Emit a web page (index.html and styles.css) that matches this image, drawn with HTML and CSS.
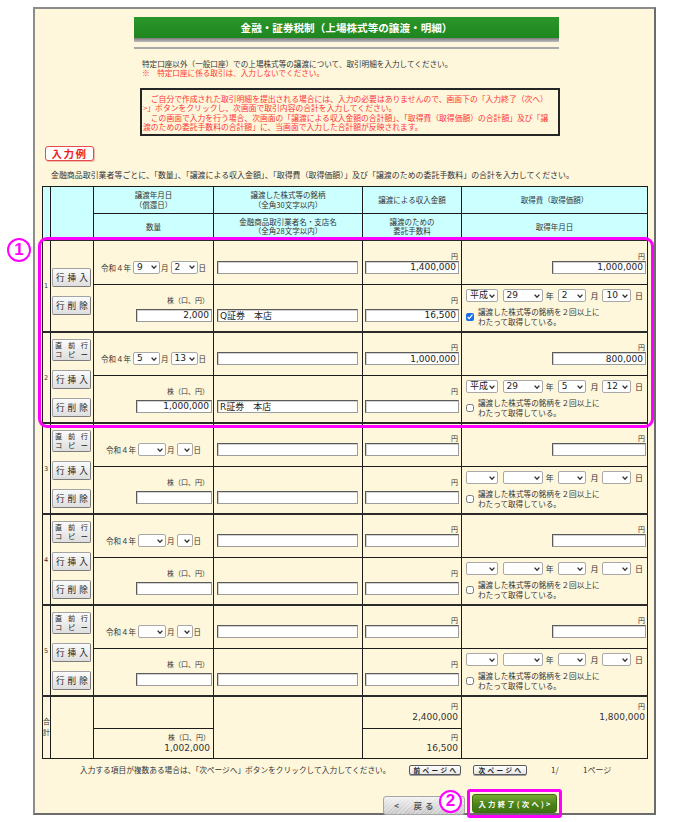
FILE: index.html
```html
<!DOCTYPE html>
<html lang="ja">
<head>
<meta charset="utf-8">
<title>金融・証券税制（上場株式等の譲渡・明細）</title>
<link rel="stylesheet" href="styles.css">
</head>
<body>
<div class="page">
  <div class="panel">
    <div class="title-wrap">
      <div class="title-bar">金融・証券税制（上場株式等の譲渡・明細）</div>
      <div class="title-shadow"></div>
      <div class="title-line"></div>
    </div>
    <p class="intro">特定口座以外（一般口座）での上場株式等の譲渡について、取引明細を入力してください。<br><span class="warn">※　特定口座に係る取引は、入力しないでください。</span></p>
    <div class="notice">　ご自分で作成された取引明細を提出される場合には、入力の必要はありませんので、画面下の「入力終了（次へ）<br>&gt;」ボタンをクリックし、次画面で取引内容の合計を入力してください。<br>　この画面で入力を行う場合、次画面の「譲渡による収入金額の合計額」、「取得費（取得価額）の合計額」及び「譲<br>渡のための委託手数料の合計額」に、当画面で入力した合計額が反映されます。</div>
    <div class="badge">入力例</div>
    <p class="lead">金融商品取引業者等ごとに、「数量」、「譲渡による収入金額」、「取得費（取得価額）」及び「譲渡のための委託手数料」の合計を入力してください。</p>

    <table class="detail">
      <colgroup>
        <col class="c-a"><col class="c-b"><col class="c-c"><col class="c-d"><col class="c-e"><col class="c-f">
      </colgroup>
      <thead>
        <tr class="h1">
          <th rowspan="2"></th>
          <th rowspan="2"></th>
          <th>譲渡年月日<br>（償還日）</th>
          <th>譲渡した株式等の銘柄<br>（全角30文字以内）</th>
          <th>譲渡による収入金額</th>
          <th>取得費（取得価額）</th>
        </tr>
        <tr class="h2">
          <th>数量</th>
          <th>金融商品取引業者名・支店名<br>（全角28文字以内）</th>
          <th>譲渡のための<br>委託手数料</th>
          <th>取得年月日</th>
        </tr>
      </thead>
      <tbody>
        <!-- record 1 -->
        <tr class="r1 first">
          <td class="num" rowspan="2">1</td>
          <td class="ops" rowspan="2">
            <div class="ops-in pad-first">
              <button class="btn act">行挿入</button>
              <button class="btn act">行削除</button>
            </div>
          </td>
          <td class="date">
            <div class="unit"></div>
            <div class="ctl">令和４年<span class="sel w27">9<svg viewBox="0 0 6 4"><path d="M0.6 0.6 L3 3.2 L5.4 0.6"/></svg></span>月<span class="sel w27">2<svg viewBox="0 0 6 4"><path d="M0.6 0.6 L3 3.2 L5.4 0.6"/></svg></span>日</div>
          </td>
          <td class="name"><div class="unit"></div><input class="txt w141" type="text" value=""></td>
          <td class="amt"><div class="unit">円</div><input class="txt num-in w94" type="text" value="1,400,000"></td>
          <td class="amt f"><div class="unit">円</div><input class="txt num-in w94" type="text" value="1,000,000"></td>
        </tr>
        <tr class="r2">
          <td class="qty"><div class="unit">株（口、円）</div><input class="txt num-in w76" type="text" value="2,000"></td>
          <td class="name"><div class="unit"></div><input class="txt w141" type="text" value="Q証券　本店"></td>
          <td class="amt"><div class="unit">円</div><input class="txt num-in w94" type="text" value="16,500"></td>
          <td class="acq">
            <div class="acq-sel"><span class="sel w32">平成<svg viewBox="0 0 6 4"><path d="M0.6 0.6 L3 3.2 L5.4 0.6"/></svg></span><span class="sel w41">29<svg viewBox="0 0 6 4"><path d="M0.6 0.6 L3 3.2 L5.4 0.6"/></svg></span><span class="u">年</span><span class="sel w29">2<svg viewBox="0 0 6 4"><path d="M0.6 0.6 L3 3.2 L5.4 0.6"/></svg></span><span class="u">月</span><span class="sel w29">10<svg viewBox="0 0 6 4"><path d="M0.6 0.6 L3 3.2 L5.4 0.6"/></svg></span><span class="u">日</span></div>
            <label class="chk"><input type="checkbox" checked><span>譲渡した株式等の銘柄を２回以上に<br>わたって取得している。</span></label>
          </td>
        </tr>

        <!-- record 2 -->
        <tr class="r1">
          <td class="num" rowspan="2">2</td>
          <td class="ops" rowspan="2">
            <div class="ops-in">
              <button class="btn copy"><span class="ln"><span>直</span><span>前</span><span>行</span></span><span class="ln"><span>コ</span><span>ピ</span><span>ー</span></span></button>
              <button class="btn act">行挿入</button>
              <button class="btn act">行削除</button>
            </div>
          </td>
          <td class="date">
            <div class="unit"></div>
            <div class="ctl">令和４年<span class="sel w27">5<svg viewBox="0 0 6 4"><path d="M0.6 0.6 L3 3.2 L5.4 0.6"/></svg></span>月<span class="sel w27">13<svg viewBox="0 0 6 4"><path d="M0.6 0.6 L3 3.2 L5.4 0.6"/></svg></span>日</div>
          </td>
          <td class="name"><div class="unit"></div><input class="txt w141" type="text" value=""></td>
          <td class="amt"><div class="unit">円</div><input class="txt num-in w94" type="text" value="1,000,000"></td>
          <td class="amt f"><div class="unit">円</div><input class="txt num-in w94" type="text" value="800,000"></td>
        </tr>
        <tr class="r2">
          <td class="qty"><div class="unit">株（口、円）</div><input class="txt num-in w76" type="text" value="1,000,000"></td>
          <td class="name"><div class="unit"></div><input class="txt w141" type="text" value="R証券　本店"></td>
          <td class="amt"><div class="unit">円</div><input class="txt num-in w94" type="text" value=""></td>
          <td class="acq">
            <div class="acq-sel"><span class="sel w32">平成<svg viewBox="0 0 6 4"><path d="M0.6 0.6 L3 3.2 L5.4 0.6"/></svg></span><span class="sel w41">29<svg viewBox="0 0 6 4"><path d="M0.6 0.6 L3 3.2 L5.4 0.6"/></svg></span><span class="u">年</span><span class="sel w29">5<svg viewBox="0 0 6 4"><path d="M0.6 0.6 L3 3.2 L5.4 0.6"/></svg></span><span class="u">月</span><span class="sel w29">12<svg viewBox="0 0 6 4"><path d="M0.6 0.6 L3 3.2 L5.4 0.6"/></svg></span><span class="u">日</span></div>
            <label class="chk"><input type="checkbox"><span>譲渡した株式等の銘柄を２回以上に<br>わたって取得している。</span></label>
          </td>
        </tr>

        <!-- record 3 -->
        <tr class="r1">
          <td class="num" rowspan="2">3</td>
          <td class="ops" rowspan="2">
            <div class="ops-in">
              <button class="btn copy"><span class="ln"><span>直</span><span>前</span><span>行</span></span><span class="ln"><span>コ</span><span>ピ</span><span>ー</span></span></button>
              <button class="btn act">行挿入</button>
              <button class="btn act">行削除</button>
            </div>
          </td>
          <td class="date">
            <div class="unit"></div>
            <div class="ctl">令和４年<span class="sel w28 empty"><svg viewBox="0 0 6 4"><path d="M0.6 0.6 L3 3.2 L5.4 0.6"/></svg></span>月<span class="sel w16 empty"><svg viewBox="0 0 6 4"><path d="M0.6 0.6 L3 3.2 L5.4 0.6"/></svg></span>日</div>
          </td>
          <td class="name"><div class="unit"></div><input class="txt w141" type="text" value=""></td>
          <td class="amt"><div class="unit">円</div><input class="txt num-in w94" type="text" value=""></td>
          <td class="amt f"><div class="unit">円</div><input class="txt num-in w94" type="text" value=""></td>
        </tr>
        <tr class="r2">
          <td class="qty"><div class="unit">株（口、円）</div><input class="txt num-in w76" type="text" value=""></td>
          <td class="name"><div class="unit"></div><input class="txt w141" type="text" value=""></td>
          <td class="amt"><div class="unit">円</div><input class="txt num-in w94" type="text" value=""></td>
          <td class="acq">
            <div class="acq-sel"><span class="sel w32 empty"><svg viewBox="0 0 6 4"><path d="M0.6 0.6 L3 3.2 L5.4 0.6"/></svg></span><span class="sel w41 empty"><svg viewBox="0 0 6 4"><path d="M0.6 0.6 L3 3.2 L5.4 0.6"/></svg></span><span class="u">年</span><span class="sel w29 empty"><svg viewBox="0 0 6 4"><path d="M0.6 0.6 L3 3.2 L5.4 0.6"/></svg></span><span class="u">月</span><span class="sel w29 empty"><svg viewBox="0 0 6 4"><path d="M0.6 0.6 L3 3.2 L5.4 0.6"/></svg></span><span class="u">日</span></div>
            <label class="chk"><input type="checkbox"><span>譲渡した株式等の銘柄を２回以上に<br>わたって取得している。</span></label>
          </td>
        </tr>

        <!-- record 4 -->
        <tr class="r1">
          <td class="num" rowspan="2">4</td>
          <td class="ops" rowspan="2">
            <div class="ops-in">
              <button class="btn copy"><span class="ln"><span>直</span><span>前</span><span>行</span></span><span class="ln"><span>コ</span><span>ピ</span><span>ー</span></span></button>
              <button class="btn act">行挿入</button>
              <button class="btn act">行削除</button>
            </div>
          </td>
          <td class="date">
            <div class="unit"></div>
            <div class="ctl">令和４年<span class="sel w28 empty"><svg viewBox="0 0 6 4"><path d="M0.6 0.6 L3 3.2 L5.4 0.6"/></svg></span>月<span class="sel w16 empty"><svg viewBox="0 0 6 4"><path d="M0.6 0.6 L3 3.2 L5.4 0.6"/></svg></span>日</div>
          </td>
          <td class="name"><div class="unit"></div><input class="txt w141" type="text" value=""></td>
          <td class="amt"><div class="unit">円</div><input class="txt num-in w94" type="text" value=""></td>
          <td class="amt f"><div class="unit">円</div><input class="txt num-in w94" type="text" value=""></td>
        </tr>
        <tr class="r2">
          <td class="qty"><div class="unit">株（口、円）</div><input class="txt num-in w76" type="text" value=""></td>
          <td class="name"><div class="unit"></div><input class="txt w141" type="text" value=""></td>
          <td class="amt"><div class="unit">円</div><input class="txt num-in w94" type="text" value=""></td>
          <td class="acq">
            <div class="acq-sel"><span class="sel w32 empty"><svg viewBox="0 0 6 4"><path d="M0.6 0.6 L3 3.2 L5.4 0.6"/></svg></span><span class="sel w41 empty"><svg viewBox="0 0 6 4"><path d="M0.6 0.6 L3 3.2 L5.4 0.6"/></svg></span><span class="u">年</span><span class="sel w29 empty"><svg viewBox="0 0 6 4"><path d="M0.6 0.6 L3 3.2 L5.4 0.6"/></svg></span><span class="u">月</span><span class="sel w29 empty"><svg viewBox="0 0 6 4"><path d="M0.6 0.6 L3 3.2 L5.4 0.6"/></svg></span><span class="u">日</span></div>
            <label class="chk"><input type="checkbox"><span>譲渡した株式等の銘柄を２回以上に<br>わたって取得している。</span></label>
          </td>
        </tr>

        <!-- record 5 -->
        <tr class="r1">
          <td class="num" rowspan="2">5</td>
          <td class="ops" rowspan="2">
            <div class="ops-in">
              <button class="btn copy"><span class="ln"><span>直</span><span>前</span><span>行</span></span><span class="ln"><span>コ</span><span>ピ</span><span>ー</span></span></button>
              <button class="btn act">行挿入</button>
              <button class="btn act">行削除</button>
            </div>
          </td>
          <td class="date">
            <div class="unit"></div>
            <div class="ctl">令和４年<span class="sel w28 empty"><svg viewBox="0 0 6 4"><path d="M0.6 0.6 L3 3.2 L5.4 0.6"/></svg></span>月<span class="sel w16 empty"><svg viewBox="0 0 6 4"><path d="M0.6 0.6 L3 3.2 L5.4 0.6"/></svg></span>日</div>
          </td>
          <td class="name"><div class="unit"></div><input class="txt w141" type="text" value=""></td>
          <td class="amt"><div class="unit">円</div><input class="txt num-in w94" type="text" value=""></td>
          <td class="amt f"><div class="unit">円</div><input class="txt num-in w94" type="text" value=""></td>
        </tr>
        <tr class="r2">
          <td class="qty"><div class="unit">株（口、円）</div><input class="txt num-in w76" type="text" value=""></td>
          <td class="name"><div class="unit"></div><input class="txt w141" type="text" value=""></td>
          <td class="amt"><div class="unit">円</div><input class="txt num-in w94" type="text" value=""></td>
          <td class="acq">
            <div class="acq-sel"><span class="sel w32 empty"><svg viewBox="0 0 6 4"><path d="M0.6 0.6 L3 3.2 L5.4 0.6"/></svg></span><span class="sel w41 empty"><svg viewBox="0 0 6 4"><path d="M0.6 0.6 L3 3.2 L5.4 0.6"/></svg></span><span class="u">年</span><span class="sel w29 empty"><svg viewBox="0 0 6 4"><path d="M0.6 0.6 L3 3.2 L5.4 0.6"/></svg></span><span class="u">月</span><span class="sel w29 empty"><svg viewBox="0 0 6 4"><path d="M0.6 0.6 L3 3.2 L5.4 0.6"/></svg></span><span class="u">日</span></div>
            <label class="chk"><input type="checkbox"><span>譲渡した株式等の銘柄を２回以上に<br>わたって取得している。</span></label>
          </td>
        </tr>

        <!-- totals -->
        <tr class="t1">
          <td class="num sum" rowspan="2">合<br>計</td>
          <td rowspan="2"></td>
          <td class="total"></td>
          <td rowspan="2"></td>
          <td class="total"><div class="unit">円</div><div class="val">2,400,000</div></td>
          <td class="total f top" rowspan="2"><div class="unit">円</div><div class="val">1,800,000</div></td>
        </tr>
        <tr class="t2">
          <td class="total"><div class="unit">株（口、円）</div><div class="val">1,002,000</div></td>
          <td class="total"><div class="unit">円</div><div class="val">16,500</div></td>
        </tr>
      </tbody>
    </table>

    <div class="pager">
      <span class="pager-note">入力する項目が複数ある場合は、「次ページへ」ボタンをクリックして入力してください。</span>
      <button class="pbtn">前ページへ</button>
      <button class="pbtn next">次ページへ</button>
      <span class="pg-cur">1/</span>
      <span class="pg-all">1ページ</span>
    </div>

    <div class="actions">
      <button class="back-btn">&lt;　戻る</button>
      <div class="next-frame"><button class="next-btn">入力終了(次へ)&gt;</button></div>
    </div>
  </div>

  <div class="hl-box"></div>
  <div class="mark mark1">1</div>
  <div class="mark mark2">2</div>
</div>
</body>
</html>
```

FILE: styles.css
```css
* { box-sizing: border-box; }
html, body { margin: 0; padding: 0; background: #ffffff; }
body {
  font-family: "Noto Sans CJK JP", "Noto Sans", sans-serif;
  font-size: 7.7px;
  color: #333;
}
p { margin: 0; }

.page {
  position: relative;
  width: 673px;
  height: 822px;
  padding: 7px 0 0 33px;
}

.panel {
  width: 623px;
  height: 808px;
  border: 2px solid #8c8c8c;
  border-right-color: #6c6c6c;
  border-bottom-color: #6c6c6c;
  background: #fff7dc;
}

/* title */
.title-wrap { margin: 8px 0 0 99px; width: 425px; }
.title-bar {
  height: 21px;
  line-height: 21px;
  background: linear-gradient(#2a962a, #1f861f);
  color: #fff;
  font-weight: bold;
  font-size: 10.6px;
  text-align: center;
}
.title-shadow { height: 4px; background: linear-gradient(#7c7c7c, #bdbdbd); }
.title-line { margin-top: 5px; height: 2px; background: #a9a9a9; }

.intro { margin: 9.5px 0 0 107px; font-size: 7.6px; line-height: 9.6px; white-space: nowrap; }
.warn { color: #ff3535; }

.notice {
  margin: 10.3px 0 0 105px;
  width: 420px;
  border: 2px solid #262626;
  padding: 4px 0 2px 1px;
  color: #ff3535;
  font-size: 7.8px;
  line-height: 9.4px;
  white-space: nowrap;
  overflow: hidden;
}

.badge {
  margin: 10px 0 0 10px;
  width: 49px;
  height: 15px;
  border: 1px solid #e84a4a;
  border-radius: 3px;
  background: #fff;
  box-shadow: 1px 1px 0 #efb8a8;
  color: #f01e1e;
  font-weight: bold;
  font-size: 10.5px;
  letter-spacing: 1.5px;
  line-height: 13px;
  text-align: center;
}

.lead { margin: 9px 0 0 16px; line-height: 10px; font-size: 7.95px; white-space: nowrap; }

/* table */
.detail {
  margin: 6px 0 0 7px;
  border-collapse: collapse;
  table-layout: fixed;
  width: 605px;
}
.c-a { width: 8px; }
.c-b { width: 43px; }
.c-c { width: 120px; }
.c-d { width: 149px; }
.c-e { width: 99px; }
.c-f { width: 186px; }

.detail th, .detail td {
  border: 1px solid #1c1c1c;
  padding: 0;
}
.detail th {
  background: #ccffff;
  font-weight: normal;
  font-size: 7.5px;
  line-height: 9.6px;
  color: #333;
  text-align: center;
  vertical-align: middle;
}
.h1 { height: 27px; }
.h2 { height: 27px; }

.detail td { vertical-align: middle; }
.r1 { height: 43px; }
.r2 { height: 48px; }
.r1.first { height: 44px; }
.t1 { height: 32px; }
.t2 { height: 30px; }

.detail tbody tr.r1 td { border-top: 2px solid #2a2a2a; }
.detail tbody tr.t1 td { border-top: 2px solid #2a2a2a; }

.num {
  font-family: "DejaVu Sans", sans-serif;
  font-size: 6.5px;
  text-align: left;
  padding-left: 1px !important;
  color: #333;
}
.num.sum {
  font-family: "Noto Sans CJK JP", sans-serif;
  font-size: 7px;
  line-height: 11px;
  padding-left: 0 !important;
}

.ops { padding-left: 1px !important; }
.ops-in { display: flex; flex-direction: column; align-items: flex-start; gap: 9px; }
.ops-in.pad-first { padding-top: 10px; }

.btn {
  display: block;
  width: 39px;
  margin: 0;
  border: 1px solid #a2a2a2;
  border-right-color: #7c7c7c;
  border-bottom-color: #7c7c7c;
  border-radius: 2px;
  background: linear-gradient(#fbfbfb, #dedede);
  font-family: "Noto Sans CJK JP", sans-serif;
  color: #222;
  padding: 0;
  white-space: nowrap;
  overflow: hidden;
}
.btn.act {
  height: 19px;
  font-size: 8.6px;
  letter-spacing: 3px;
  padding: 0 0 0 3px;
  line-height: 17px;
  text-align: center;
}
.btn.copy {
  display: flex;
  flex-direction: column;
  justify-content: center;
  height: 22px;
  padding: 0 2px;
  font-size: 7.2px;
  line-height: 9px;
}
.btn.copy .ln { display: flex; justify-content: space-between; height: 9px; }

.unit {
  height: 10px;
  line-height: 10px;
  font-size: 7px;
  text-align: right;
  color: #333;
}

.date { text-align: center; }
.date .ctl {
  display: flex;
  justify-content: center;
  align-items: center;
  height: 13px;
  font-size: 7.5px;
  color: #333;
}
.date .ctl .sel { margin: 0 1px 0 2px; }
.date .ctl .sel + .sel { margin-left: 2px; }

.sel {
  display: inline-flex;
  align-items: center;
  justify-content: space-between;
  height: 13px;
  border: 1px solid #a8a8a8;
  border-radius: 2px;
  background: #fff;
  padding: 0 2px 0 3px;
  font-family: "DejaVu Sans", "Noto Sans CJK JP", sans-serif;
  font-size: 9px;
  color: #222;
  line-height: 11px;
}
.sel.empty { justify-content: flex-end; }
.sel svg {
  width: 6px;
  height: 4px;
  flex: none;
}
.sel svg path { fill: none; stroke: #333; stroke-width: 1.4; }
.w16 { width: 16px; padding-right: 2px; }
.w27 { width: 27px; }
.w28 { width: 28px; }
.w29 { width: 29px; }
.w32 { width: 32px; }
.w41 { width: 41px; }

.txt {
  display: block;
  height: 13px;
  margin: 0;
  padding: 0 2px;
  border: 1px solid #9c9c9c;
  border-top-color: #5a5a5a;
  border-left-color: #5a5a5a;
  box-shadow: inset 1px 1px 0 #d2d2d2;
  background: #fff;
  font-family: "DejaVu Sans", "Noto Sans CJK JP", sans-serif;
  font-size: 9px;
  color: #222;
  outline: none;
}
.num-in { text-align: right; }
.w141 { width: 141px; }
.w94 { width: 94px; }
.w76 { width: 76px; }

.name { padding-left: 3px !important; }
.amt { padding-right: 2px !important; }
.amt .unit { padding-right: 1px; }
.amt .txt { margin-left: auto; }
.amt.f { padding-right: 1px !important; }
.r2 .unit { margin-bottom: 4px; }
.r2 td { padding-top: 1px !important; }

.qty { padding-right: 1px !important; }
.qty .unit { padding-right: 3px; }
.qty .txt { margin-left: auto; }

.acq { padding-left: 4px !important; }
.acq-sel { display: flex; align-items: center; height: 13px; font-size: 8px; color: #333; }
.acq-sel .w32 { margin-right: 5px; }
.acq-sel .w41 { margin-right: 3px; }
.acq-sel .u { margin-right: 4px; }
.acq-sel .w29 { margin-right: 4px; }
.chk {
  display: flex;
  align-items: center;
  margin-top: 5px;
  font-size: 7.6px;
  line-height: 10px;
  color: #333;
}
.chk input {
  width: 8px;
  height: 8px;
  margin: 0 4px 0 0;
  accent-color: #1a6fe6;
}

.total { padding-right: 2px !important; }
.total .unit { padding-right: 1px; }
.val {
  font-family: "DejaVu Sans", sans-serif;
  font-size: 9px;
  line-height: 12px;
  text-align: right;
  color: #333;
  padding-right: 1px;
}
.total.top { vertical-align: top; padding-top: 4px !important; }
.total.f { padding-right: 1px !important; }

/* pager */
.pager {
  display: flex;
  align-items: center;
  height: 12px;
  margin: 5px 0 0 45px;
}
.pager-note { width: 329px; white-space: nowrap; }
.pbtn {
  height: 10px;
  width: 52px;
  margin: 0;
  padding: 0 0 0 2px;
  border: 1px solid #5a5a5a;
  border-radius: 2px;
  background: linear-gradient(#ffffff, #e6e6e6);
  box-shadow: 0 1px 0 #a0a0a0;
  font-family: "Noto Sans CJK JP", sans-serif;
  font-size: 6.6px;
  font-weight: bold;
  letter-spacing: 2.4px;
  line-height: 8px;
  color: #222;
  white-space: nowrap;
}
.pbtn.next { margin-left: 12px; width: 54px; }
.pg-cur { margin-left: 24px; font-size: 8px; width: 32px; }
.pg-all { font-size: 8px; }

/* actions */
.actions {
  display: flex;
  align-items: center;
  margin: 13px 0 0 348px;
}
.back-btn {
  width: 82px;
  height: 19px;
  margin: 4px 0 0 0;
  padding: 0 0 0 10px;
  text-align: left;
  border: 1px solid #a6a6a6;
  border-radius: 3px;
  background: repeating-linear-gradient(135deg, rgba(255,255,255,0.35) 0 1px, rgba(0,0,0,0) 1px 3px), linear-gradient(#f2f2f2, #c6c6c6);
  font-family: "Noto Sans CJK JP", sans-serif;
  font-size: 8.5px;
  font-weight: bold;
  letter-spacing: 3px;
  color: #5a5a5a;
  line-height: 17px;
  white-space: nowrap;
}
.next-frame {
  margin-left: 2px;
  border: 3px solid #ff00ff;
  border-radius: 3px;
  padding: 2px;
}
.next-btn {
  display: block;
  width: 85px;
  height: 19px;
  margin: 0;
  padding: 0 0 0 2px;
  border: 1px solid #3e6e12;
  border-radius: 3px;
  background: linear-gradient(#77a933, #4b8219 55%, #3f7414);
  font-family: "Noto Sans CJK JP", sans-serif;
  font-size: 7.4px;
  font-weight: bold;
  letter-spacing: 2.2px;
  color: #fff;
  line-height: 17px;
  text-align: center;
  white-space: nowrap;
}

/* annotations overlay */
.hl-box {
  position: absolute;
  left: 38px;
  top: 237px;
  width: 616px;
  height: 191px;
  border: 3px solid #ff00ff;
  border-radius: 9px;
  pointer-events: none;
}
.mark {
  position: absolute;
  width: 24px;
  height: 24px;
  border: 2.5px solid #ff00ff;
  border-radius: 50%;
  background: #fff;
  color: #ff00ff;
  font-family: "Liberation Sans", sans-serif;
  font-weight: bold;
  font-size: 17px;
  line-height: 19px;
  text-align: center;
}
.mark1 { left: 7px; top: 238px; }
.mark2 { left: 439px; top: 790px; width: 23px; height: 23px; line-height: 18px; }
```
